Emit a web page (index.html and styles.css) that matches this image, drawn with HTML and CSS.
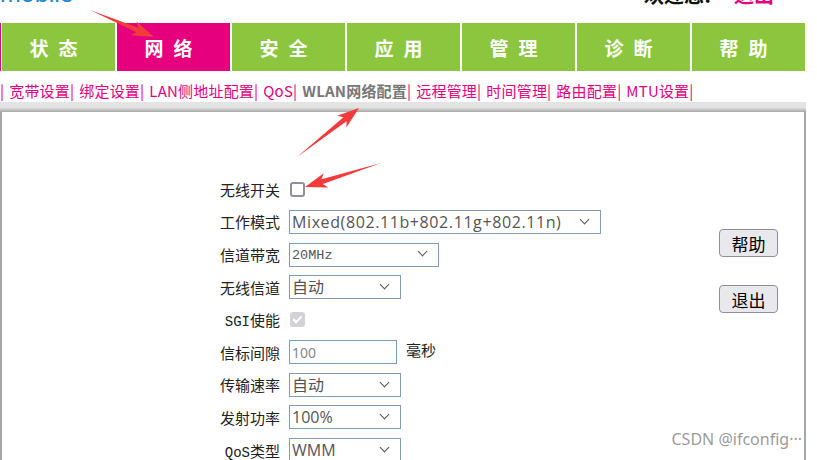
FILE: index.html
```html
<!DOCTYPE html>
<html>
<head>
  <meta charset="utf-8">
  <title>WLAN网络配置</title>
  <link rel="stylesheet" href="styles.css">
</head>
<body>
  <div class="page">
    <div class="header">
      <div class="logo">mobile</div>
      <div class="welcome">欢迎您! <a class="logout" href="#">退出</a></div>
    </div>

    <div class="nav">
      <div class="tab">状态</div>
      <div class="tab active">网络</div>
      <div class="tab">安全</div>
      <div class="tab">应用</div>
      <div class="tab">管理</div>
      <div class="tab">诊断</div>
      <div class="tab">帮助</div>
    </div>

    <div class="submenu">
      | <a href="#">宽带设置</a>| <a href="#">绑定设置</a>| <a href="#">LAN侧地址配置</a>| <a href="#">QoS</a>| <a href="#" class="current">WLAN网络配置</a>| <a href="#">远程管理</a>| <a href="#">时间管理</a>| <a href="#">路由配置</a>| <a href="#">MTU设置</a>|
    </div>

    <div class="bar"></div>

    <div class="content">
      <div class="form">
        <div class="label">无线开关</div>
        <div class="field"><span class="check"></span></div>

        <div class="label">工作模式</div>
        <div class="field">
          <span class="select w-mode"><select><option>Mixed(802.11b+802.11g+802.11n)</option></select></span>
        </div>

        <div class="label">信道带宽</div>
        <div class="field">
          <span class="select w-band"><select class="mono"><option>20MHz</option></select></span>
        </div>

        <div class="label">无线信道</div>
        <div class="field">
          <span class="select w-short"><select><option>自动</option></select></span>
        </div>

        <div class="label"><span class="latin">SGI</span>使能</div>
        <div class="field"><span class="check checked disabled"></span></div>

        <div class="label">信标间隙</div>
        <div class="field">
          <input type="text" class="text-input" value="100"> <span class="unit">毫秒</span>
        </div>

        <div class="label">传输速率</div>
        <div class="field">
          <span class="select w-short"><select><option>自动</option></select></span>
        </div>

        <div class="label">发射功率</div>
        <div class="field">
          <span class="select w-short"><select><option>100%</option></select></span>
        </div>

        <div class="label"><span class="latin">QoS</span>类型</div>
        <div class="field">
          <span class="select w-short"><select><option>WMM</option></select></span>
        </div>
      </div>

      <div class="side">
        <button class="btn">帮助</button>
        <button class="btn">退出</button>
      </div>
    </div>

    <div class="watermark">CSDN @ifconfig···</div>

    <!-- annotation arrows -->
    <svg class="marks" width="817" height="460" viewBox="0 0 817 460">
      <polygon points="90,10 136.4,32.3 130.8,35.3 154,37 136.6,21.5 138.4,27.7" />
      <polygon points="297,157 346.5,121.2 346.4,127.5 359,108 337.1,115.7 343.4,117.2" />
      <polygon points="381,163 322.9,184.0 328.3,187.6 305,187 323.7,173.3 321.5,179.2" />
    </svg>
  </div>
</body>
</html>
```

FILE: styles.css
```css
body {
  margin: 0;
  font-family: "Open Sans", "Noto Sans CJK SC", sans-serif;
  background-color: #fff;
}

.page {
  position: relative;
  width: 806px;
  height: 460px;
  overflow: hidden;
}

.header {
  height: 23px;
  display: flex;
  justify-content: space-between;
  align-items: flex-start;
}

.logo {
  margin-top: -20px;
  font-family: "Liberation Sans", Arial, sans-serif;
  font-size: 25px;
  line-height: 26px;
  color: #1a88cf;
}

.welcome {
  margin-top: -16px;
  margin-right: 32px;
  font-family: "Noto Sans CJK SC", sans-serif;
  font-size: 20px;
  line-height: 22px;
  font-weight: bold;
  color: #111;
}

.logout {
  margin-left: 18px;
  color: #e6007e;
  text-decoration: none;
}

.nav {
  display: flex;
  gap: 2px;
  height: 48px;
  border-left: 1px solid #e6007e;
  padding-left: 1px;
}

.tab {
  width: 113px;
  display: flex;
  align-items: center;
  justify-content: center;
  background-color: #8cc63f;
  color: #fff;
  font-family: "Noto Sans CJK SC", sans-serif;
  font-size: 19px;
  font-weight: bold;
  letter-spacing: 10px;
}

.tab.active {
  background-color: #e6007e;
}

.submenu {
  padding-top: 9px;
  height: 22px;
  line-height: 22px;
  font-family: "Noto Sans CJK SC", sans-serif;
  font-size: 15px;
  letter-spacing: 0.2px;
  word-spacing: 1.4px;
  color: #e6007e;
  white-space: nowrap;
}

.submenu a {
  color: #e6007e;
  text-decoration: none;
}

.submenu a.current {
  color: #777;
  font-weight: bold;
}

.bar {
  height: 10px;
  background: linear-gradient(#e4e4e4, #e2e2e2 55%, #a8a8a8);
}

.content {
  display: flex;
  min-height: 360px;
  border-left: 2px solid #a6a6a6;
  border-right: 2px solid #a6a6a6;
}

.form {
  display: grid;
  grid-template-columns: 278px auto;
  grid-auto-rows: 32.6px;
  column-gap: 9px;
  align-items: center;
  padding-top: 61px;
}

.label {
  text-align: right;
  font-family: "Noto Sans CJK SC", sans-serif;
  font-size: 15px;
  color: #222;
}

.latin {
  font-family: "Liberation Mono", monospace;
  font-size: 14px;
}

.field {
  display: flex;
  align-items: center;
}

.check {
  width: 11px;
  height: 11px;
  border: 2px solid #8f8f9d;
  border-radius: 3px;
  margin-left: 1px;
}

.check.checked.disabled {
  border-color: #d2d2d6;
  background-color: #d2d2d6;
  position: relative;
}

.check.checked::after {
  content: "";
  position: absolute;
  left: 3px;
  top: 0px;
  width: 3px;
  height: 7px;
  border-right: 2px solid #fff;
  border-bottom: 2px solid #fff;
  transform: rotate(45deg);
}

.select {
  position: relative;
  display: inline-block;
}

.select select {
  appearance: none;
  -webkit-appearance: none;
  width: 100%;
  height: 24px;
  padding: 0 0 0 2px;
  border: 1px solid #7f9db9;
  border-radius: 0;
  background-color: #fff;
  font-family: "Open Sans", "Noto Sans CJK SC", sans-serif;
  font-size: 16px;
  color: #555;
}

.w-mode select {
  letter-spacing: 0.6px;
}

.select select.mono {
  font-family: "Liberation Mono", monospace;
  font-size: 13.5px;
}

.select::after {
  content: "";
  position: absolute;
  right: 13px;
  top: 6px;
  width: 6px;
  height: 6px;
  border-right: 1.5px solid #555;
  border-bottom: 1.5px solid #555;
  transform: rotate(45deg);
  pointer-events: none;
}

.w-mode {
  width: 312px;
}

.w-band {
  width: 150px;
}

.w-short {
  width: 112px;
}

.text-input {
  width: 108px;
  height: 24px;
  box-sizing: border-box;
  padding: 0 2px;
  border: 1px solid #7f9db9;
  font-family: "Noto Sans", sans-serif;
  font-size: 14px;
  color: #888;
}

.unit {
  margin-left: 9px;
  margin-top: -6px;
  font-family: "Noto Sans CJK SC", sans-serif;
  font-size: 15px;
  color: #222;
}

.side {
  margin-left: auto;
  margin-right: 26px;
  padding-top: 117px;
  display: flex;
  flex-direction: column;
  gap: 28px;
}

.btn {
  width: 59px;
  height: 28px;
  border: 1px solid #8f8f9d;
  border-radius: 4px;
  background-color: #e9e9ed;
  font-family: "Noto Sans CJK SC", sans-serif;
  font-size: 17px;
  color: #000;
  padding: 0;
}

.watermark {
  position: absolute;
  right: 4px;
  bottom: 10px;
  font-family: "Noto Sans", sans-serif;
  font-size: 16px;
  color: rgba(120, 120, 120, 0.75);
}

.marks {
  position: absolute;
  left: 0;
  top: 0;
  pointer-events: none;
}

.marks polygon {
  fill: #f23b3b;
}
```
